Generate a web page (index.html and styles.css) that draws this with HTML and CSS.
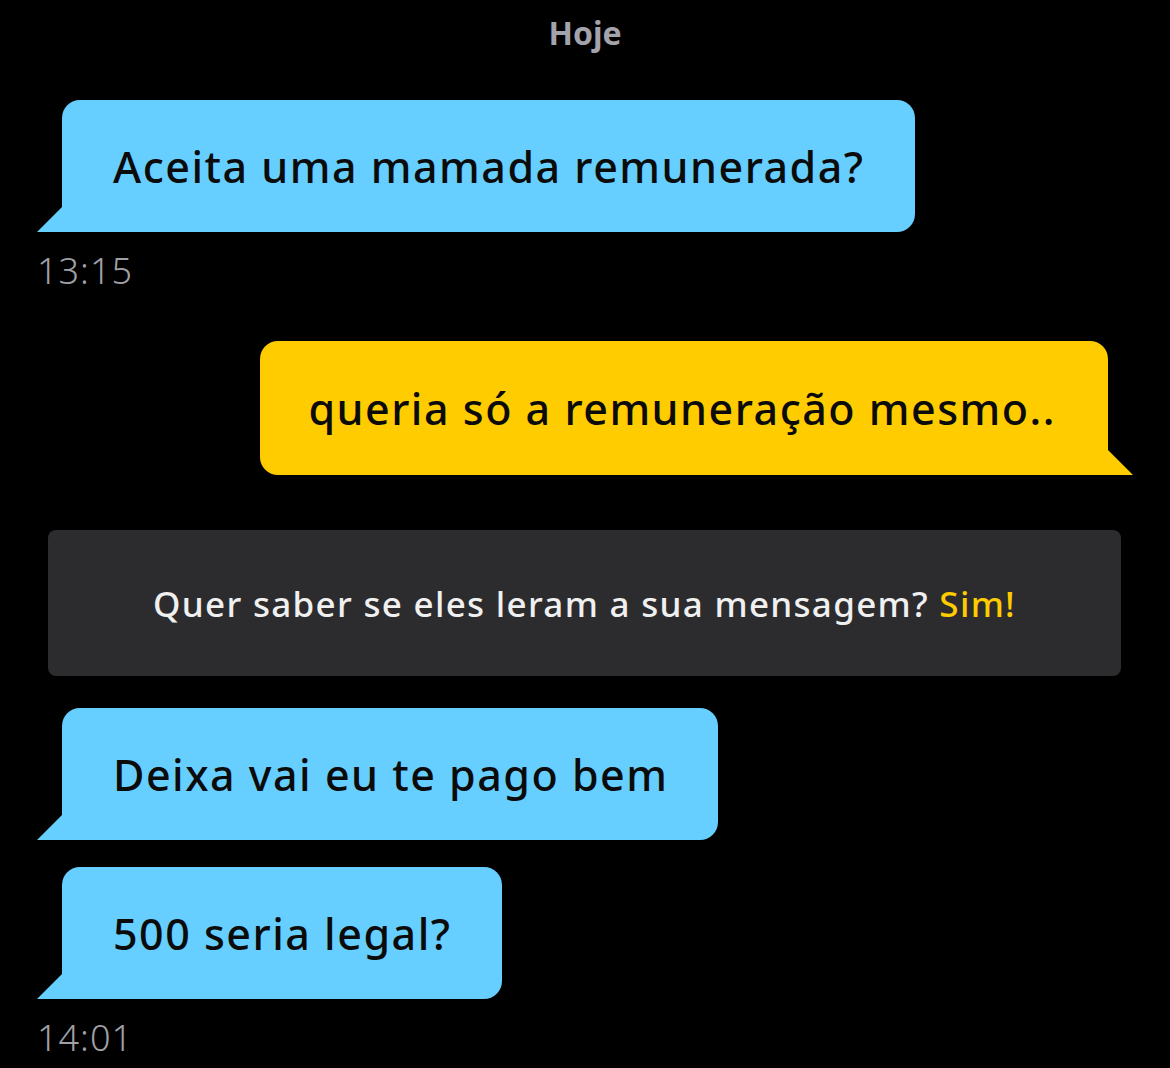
FILE: index.html
```html
<!DOCTYPE html>
<html lang="pt">
<head>
<meta charset="utf-8">
<title>Chat</title>
<link rel="stylesheet" href="styles.css">
</head>
<body>
<main class="chat">
  <div class="day">Hoje</div>

  <div class="row row-in first">
    <div class="bubble in">Aceita uma mamada remunerada?</div>
  </div>
  <div class="time">13:15</div>

  <div class="row row-out">
    <div class="bubble out">queria só a remuneração mesmo..</div>
  </div>

  <div class="banner">Quer saber se eles leram a sua mensagem? <span class="yes">Sim!</span></div>

  <div class="row row-in third">
    <div class="bubble in">Deixa vai eu te pago bem</div>
  </div>
  <div class="row row-in fourth">
    <div class="bubble in">500 seria legal?</div>
  </div>
  <div class="time">14:01</div>
</main>
</body>
</html>
```

FILE: styles.css
```css
html, body {
  margin: 0;
  padding: 0;
  background: #000;
}
body {
  font-family: "Noto Sans", "Open Sans", sans-serif;
  width: 1170px;
  height: 1068px;
  overflow: hidden;
}
.chat {
  display: flex;
  flex-direction: column;
}
.day {
  padding-top: 13px;
  height: 40px;
  line-height: 40px;
  text-align: center;
  font-size: 32px;
  font-weight: 700;
  color: #a3a3ab;
}
.row {
  display: flex;
}
.row-in {
  padding-left: 62px;
}
.row-out {
  justify-content: flex-end;
  padding-right: 62px;
  margin-top: 50px;
}
.first { margin-top: 47px; }
.third { margin-top: 32px; }
.fourth { margin-top: 27px; }

.bubble {
  position: relative;
  height: 132px;
  display: flex;
  align-items: center;
  padding: 0 50px 0 51px;
  font-size: 43px;
  font-weight: 500;
  letter-spacing: 1.5px;
  color: #0b0b0b;
  white-space: nowrap;
}
.bubble.in {
  background: #66cfff;
  border-radius: 18px 18px 18px 0;
}
.bubble.out {
  background: #ffcc00;
  border-radius: 18px 18px 0 18px;
  height: 134px;
  padding: 0 52px 0 48px;
}
.bubble.in::before,
.bubble.out::before {
  content: "";
  position: absolute;
  bottom: 0;
  width: 25px;
  height: 25px;
}
.bubble.in::before {
  left: -25px;
  background: #66cfff;
  clip-path: polygon(100% 0, 100% 100%, 0 100%);
}
.bubble.out::before {
  right: -25px;
  background: #ffcc00;
  clip-path: polygon(0 0, 100% 100%, 0 100%);
}
.time {
  margin-top: 19px;
  padding-left: 37px;
  height: 40px;
  line-height: 40px;
  font-size: 36px;
  font-weight: 300;
  letter-spacing: 1px;
  color: #a0a0a6;
}
.banner {
  margin: 55px 49px 0 48px;
  height: 146px;
  display: flex;
  align-items: center;
  justify-content: center;
  background: #2c2c2e;
  border-radius: 8px;
  font-size: 35px;
  font-weight: 500;
  letter-spacing: 1.3px;
  color: #f0f0f0;
  white-space: pre;
}
.yes {
  color: #ffcc00;
}
```
